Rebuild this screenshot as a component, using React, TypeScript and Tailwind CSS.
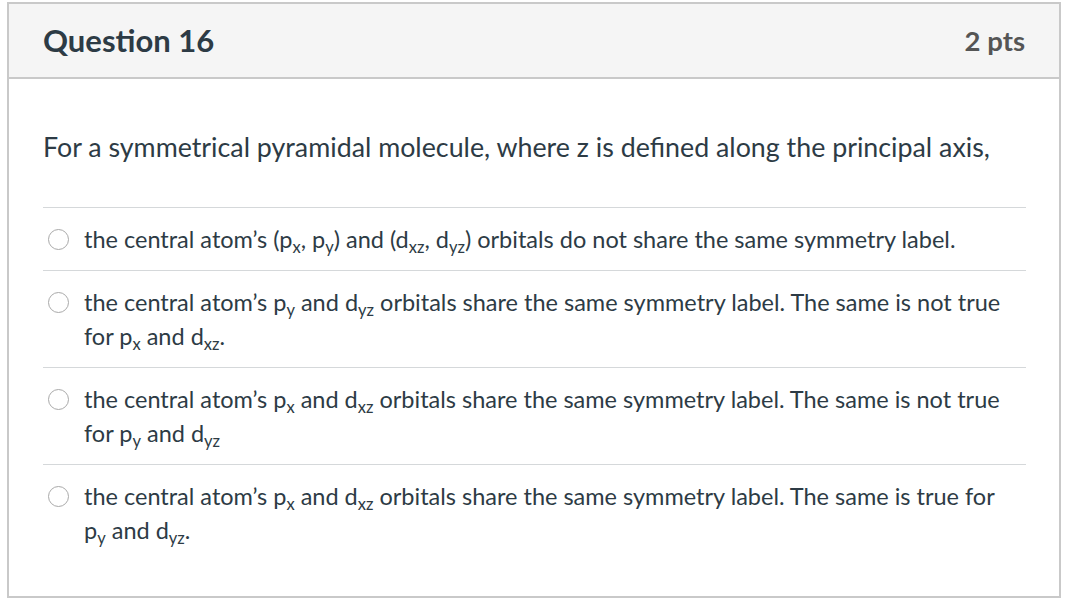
const font = { fontFamily: 'Lato, "Liberation Sans", sans-serif' };

const Sub = ({ children }: { children: React.ReactNode }) => (
  <sub className="text-[16.5px] relative bottom-[-0.28em]">{children}</sub>
);

const answers: React.ReactNode[] = [
  <>
    the central atom’s (p<Sub>x</Sub>, p<Sub>y</Sub>) and (d<Sub>xz</Sub>, d<Sub>yz</Sub>) orbitals do not share the same
    symmetry label.
  </>,
  <>
    the central atom’s p<Sub>y</Sub> and d<Sub>yz</Sub> orbitals share the same symmetry label. The same is not true
    for p<Sub>x</Sub> and d<Sub>xz</Sub>.
  </>,
  <>
    the central atom’s p<Sub>x</Sub> and d<Sub>xz</Sub> orbitals share the same symmetry label. The same is not true
    for p<Sub>y</Sub> and d<Sub>yz</Sub>
  </>,
  <>
    the central atom’s p<Sub>x</Sub> and d<Sub>xz</Sub> orbitals share the same symmetry label. The same is true for
    p<Sub>y</Sub> and d<Sub>yz</Sub>.
  </>,
];

const AnswerRow = ({ children }: { children: React.ReactNode }) => (
  <div className="flex items-start border-t border-[#d5d8da] py-[14px]">
    <div className="w-[41px] shrink-0 pt-[7px] pl-[5px]">
      <div className="w-[21px] h-[21px] rounded-full border-[1.5px] border-[#a9a9a9] bg-white"></div>
    </div>
    <div className="flex-1 pr-[8px] text-[23.5px] leading-[34px] text-[#2d3b45]">{children}</div>
  </div>
);

export default function App() {
  return (
    <div className="w-[1066px] h-[616px] bg-white pt-[2px] pl-[7px]" style={font}>
      <div className="w-[1054px] h-[596px] border-2 border-[#c9c9c9] bg-white flex flex-col">
        <div className="h-[75px] bg-[#f5f5f5] border-b-2 border-[#c9c9c9] flex items-center justify-between px-[34px]">
          <div className="text-[31px] font-bold text-[#2d3b45]">Question 16</div>
          <div className="text-[27.5px] font-bold text-[#555555]">2 pts</div>
        </div>
        <div className="pt-[51px] pl-[34px] pr-[33px]">
          <div className="text-[26.8px] leading-[34px] text-[#2d3b45]">
            For a symmetrical pyramidal molecule, where z is defined along the principal axis,
          </div>
          <div className="mt-[43px]">
            {answers.map((a, i) => (
              <AnswerRow key={i}>{a}</AnswerRow>
            ))}
          </div>
        </div>
      </div>
    </div>
  );
}
